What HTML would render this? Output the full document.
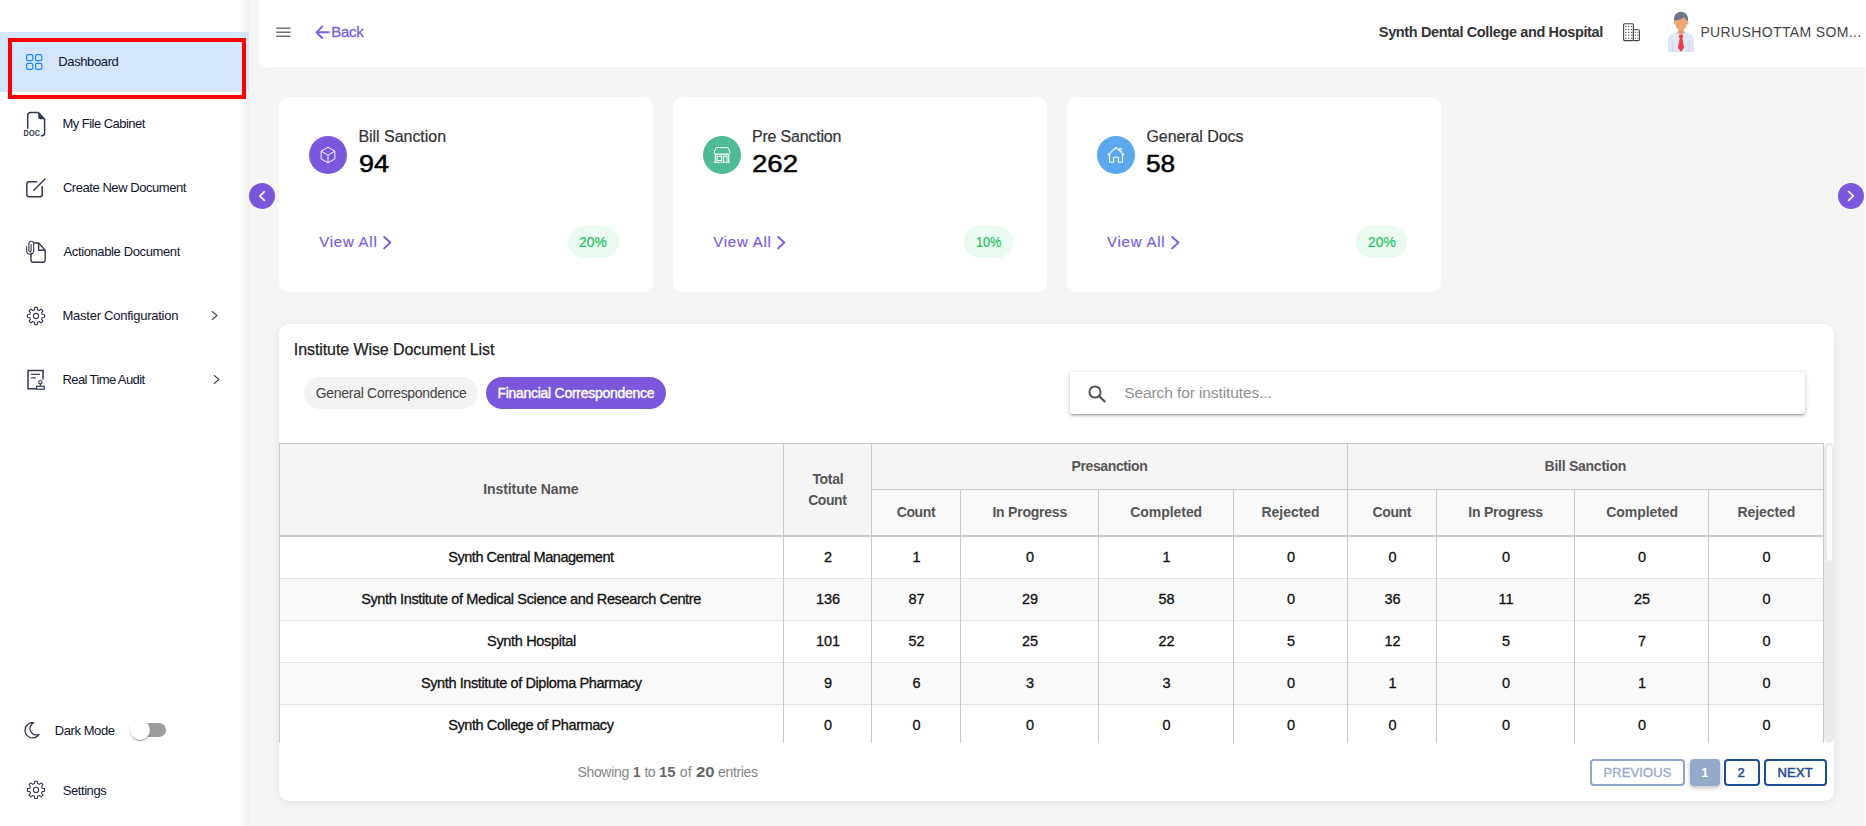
<!DOCTYPE html>
<html><head><meta charset="utf-8"><title>Dashboard</title>
<style>
html,body{margin:0;padding:0}
body{width:1866px;height:826px;overflow:hidden;position:relative;background:#f5f5f5;font-family:"Liberation Sans",sans-serif}
.t{position:absolute;white-space:nowrap;line-height:1}
.abs{position:absolute}
svg{position:absolute;overflow:visible}
.card{position:absolute;background:#fff;border-radius:10px}

</style></head>
<body>
<div class="abs" style="left:0;top:0;width:249px;height:826px;background:linear-gradient(to right,#fff 0,#fff 238px,#f8f8f8 243px,#f0f0f0 248px,#f1f1f1 249px)"></div>
<div class="abs" style="left:0;top:32px;width:249px;height:60px;background:#d3e6fc"></div>
<div class="abs" style="left:8px;top:38px;width:230px;height:53px;border:4px solid #ff0000"></div>
<div class="abs" style="left:259px;top:0;width:1607px;height:67px;background:#fff;border-radius:0 0 0 8px"></div>
<div class="abs" style="left:1864px;top:67px;width:2px;height:759px;background:#f9f9f9"></div>
<div class="card" style="left:279px;top:97px;width:374px;height:195px"></div>
<div class="card" style="left:673px;top:97px;width:374px;height:195px"></div>
<div class="card" style="left:1067px;top:97px;width:374px;height:195px"></div>
<div class="card" style="left:279px;top:324px;width:1555px;height:477px;box-shadow:0 2px 10px rgba(0,0,0,0.08)"></div>
<span class="t" style="left:58.30px;top:55px;font-size:13px;letter-spacing:-0.381px;color:#11142d;">Dashboard</span>
<span class="t" style="left:62.50px;top:117px;font-size:13px;letter-spacing:-0.532px;color:#11142d;">My File Cabinet</span>
<span class="t" style="left:62.88px;top:181px;font-size:13px;letter-spacing:-0.442px;color:#11142d;">Create New Document</span>
<span class="t" style="left:63.50px;top:245px;font-size:13px;letter-spacing:-0.378px;color:#11142d;">Actionable Document</span>
<span class="t" style="left:62.50px;top:309px;font-size:13px;letter-spacing:-0.251px;color:#11142d;">Master Configuration</span>
<span class="t" style="left:62.50px;top:373px;font-size:13px;letter-spacing:-0.607px;color:#11142d;">Real Time Audit</span>
<span class="t" style="left:54.70px;top:724px;font-size:13px;letter-spacing:-0.412px;color:#11142d;">Dark Mode</span>
<span class="t" style="left:62.67px;top:784px;font-size:13px;letter-spacing:-0.411px;color:#11142d;">Settings</span>
<span class="t" style="left:331.25px;top:24px;font-size:15px;letter-spacing:-0.308px;color:#7b5ce0;-webkit-text-stroke:0.3px #7b5ce0;">Back</span>
<span class="t" style="left:1378.83px;top:25px;font-size:14.5px;letter-spacing:-0.363px;color:#333;font-weight:700;">Synth Dental College and Hospital</span>
<span class="t" style="left:1700.38px;top:25px;font-size:14px;letter-spacing:0.375px;color:#444;">PURUSHOTTAM SOM...</span>
<div class="abs" style="left:309px;top:136px;width:38px;height:38px;border-radius:50%;background:#7a57dd"></div>
<span class="t" style="left:358.45px;top:129px;font-size:16px;letter-spacing:-0.037px;color:#333;-webkit-text-stroke:0.2px #333;">Bill Sanction</span>
<span class="t" style="left:358.71px;top:153px;font-size:23.5px;letter-spacing:0.000px;color:#000;-webkit-text-stroke:0.5px #000;transform:scaleX(1.1487);transform-origin:0 0;">94</span>
<span class="t" style="left:319.20px;top:234px;font-size:15px;letter-spacing:0.764px;color:#7b5ce0;-webkit-text-stroke:0.2px #7b5ce0;">View All</span>
<svg style="left:382.8px;top:236px" width="9" height="14" viewBox="0 0 9 14"><path d="M1.2 1 L7.3 6.6 L1.2 12.4" fill="none" stroke="#7b5ce0" stroke-width="2" stroke-linecap="round" stroke-linejoin="round"/></svg>
<div class="abs" style="left:568px;top:226px;width:51px;height:32px;border-radius:16px;background:#ebfaf1"></div>
<span class="t" style="left:579.38px;top:235px;font-size:14px;letter-spacing:0.000px;color:#22c05c;-webkit-text-stroke:0.2px #22c05c;transform:scaleX(0.9889);transform-origin:0 0;">20%</span>
<div class="abs" style="left:703px;top:136px;width:38px;height:38px;border-radius:50%;background:#4fba97"></div>
<span class="t" style="left:751.95px;top:129px;font-size:16px;letter-spacing:-0.198px;color:#333;-webkit-text-stroke:0.2px #333;">Pre Sanction</span>
<span class="t" style="left:751.88px;top:153px;font-size:23.5px;letter-spacing:0.000px;color:#000;-webkit-text-stroke:0.5px #000;transform:scaleX(1.1742);transform-origin:0 0;">262</span>
<span class="t" style="left:713.30px;top:234px;font-size:15px;letter-spacing:0.750px;color:#7b5ce0;-webkit-text-stroke:0.2px #7b5ce0;">View All</span>
<svg style="left:776.8px;top:236px" width="9" height="14" viewBox="0 0 9 14"><path d="M1.2 1 L7.3 6.6 L1.2 12.4" fill="none" stroke="#7b5ce0" stroke-width="2" stroke-linecap="round" stroke-linejoin="round"/></svg>
<div class="abs" style="left:964px;top:226px;width:49px;height:32px;border-radius:16px;background:#ebfaf1"></div>
<span class="t" style="left:975.59px;top:235px;font-size:14px;letter-spacing:0.000px;color:#22c05c;-webkit-text-stroke:0.2px #22c05c;transform:scaleX(0.9052);transform-origin:0 0;">10%</span>
<div class="abs" style="left:1097px;top:136px;width:38px;height:38px;border-radius:50%;background:#5ca8ec"></div>
<span class="t" style="left:1146.45px;top:129px;font-size:16px;letter-spacing:-0.075px;color:#333;-webkit-text-stroke:0.2px #333;">General Docs</span>
<span class="t" style="left:1146.22px;top:153px;font-size:23.5px;letter-spacing:0.000px;color:#000;-webkit-text-stroke:0.5px #000;transform:scaleX(1.1159);transform-origin:0 0;">58</span>
<span class="t" style="left:1107.00px;top:234px;font-size:15px;letter-spacing:0.764px;color:#7b5ce0;-webkit-text-stroke:0.2px #7b5ce0;">View All</span>
<svg style="left:1170.6px;top:236px" width="9" height="14" viewBox="0 0 9 14"><path d="M1.2 1 L7.3 6.6 L1.2 12.4" fill="none" stroke="#7b5ce0" stroke-width="2" stroke-linecap="round" stroke-linejoin="round"/></svg>
<div class="abs" style="left:1356px;top:226px;width:51px;height:32px;border-radius:16px;background:#ebfaf1"></div>
<span class="t" style="left:1367.58px;top:235px;font-size:14px;letter-spacing:0.000px;color:#22c05c;-webkit-text-stroke:0.2px #22c05c;transform:scaleX(0.9889);transform-origin:0 0;">20%</span>
<div class="abs" style="left:249px;top:183px;width:26px;height:26px;border-radius:50%;background:#7a57dd"></div>
<svg style="left:258px;top:190px" width="8" height="12" viewBox="0 0 8 12"><path d="M6.4 1.7 L1.8 6.05 L6.4 10.4" fill="none" stroke="#fff" stroke-width="1.6" stroke-linecap="round" stroke-linejoin="round"/></svg>
<div class="abs" style="left:1838px;top:183px;width:26px;height:26px;border-radius:50%;background:#7a57dd"></div>
<svg style="left:1846.6px;top:190.2px" width="8" height="12" viewBox="0 0 8 12"><path d="M1.6 1.5 L6.3 5.9 L1.6 10.3" fill="none" stroke="#fff" stroke-width="1.6" stroke-linecap="round" stroke-linejoin="round"/></svg>
<span class="t" style="left:293.80px;top:342px;font-size:16px;letter-spacing:-0.082px;color:#222;-webkit-text-stroke:0.25px #222;">Institute Wise Document List</span>
<div class="abs" style="left:304px;top:377px;width:174px;height:32px;border-radius:16px;background:#f3f3f3"></div>
<span class="t" style="left:315.68px;top:386px;font-size:14px;letter-spacing:-0.286px;color:#444;">General Correspondence</span>
<div class="abs" style="left:486px;top:377px;width:180px;height:32px;border-radius:16px;background:#7a57dd"></div>
<span class="t" style="left:497.38px;top:386px;font-size:14px;letter-spacing:-0.272px;color:#fff;-webkit-text-stroke:0.4px #fff;">Financial Correspondence</span>
<div class="abs" style="left:1070px;top:372px;width:735px;height:42px;border-radius:3px;background:#fff;box-shadow:0 2px 2px 0 rgba(0,0,0,.14),0 3px 1px -2px rgba(0,0,0,.12),0 1px 5px 0 rgba(0,0,0,.2)"></div>
<svg style="left:1087px;top:384px" width="20" height="20" viewBox="0 0 20 20"><circle cx="8" cy="8" r="5.6" fill="none" stroke="#555" stroke-width="2"/><path d="M12.2 12.2 L17.6 17.4" stroke="#555" stroke-width="2.2" stroke-linecap="round"/></svg>
<span class="t" style="left:1124.25px;top:385px;font-size:15.5px;letter-spacing:-0.098px;color:#8f8f8f;">Search for institutes...</span>
<div class="abs" style="left:279px;top:443px;width:1546px;height:300px;overflow:hidden">
<div class="abs" style="left:0;top:0;width:1545px;height:93px;background:#f5f5f5"></div>
<div class="abs" style="left:592px;top:46px;width:953px;height:47px;background:#f9f9f9"></div>
<div class="abs" style="left:0;top:135px;width:1545px;height:42px;background:#f9f9f9"></div>
<div class="abs" style="left:0;top:219px;width:1545px;height:42px;background:#f9f9f9"></div>
<div class="abs" style="left:0;top:0;width:1545px;height:1px;background:#c9c9c9"></div>
<div class="abs" style="left:592px;top:46px;width:953px;height:1px;background:#c9c9c9"></div>
<div class="abs" style="left:0;top:92px;width:1545px;height:2px;background:#c9c9c9"></div>
<div class="abs" style="left:0;top:135px;width:1545px;height:1px;background:#e3e3e3"></div>
<div class="abs" style="left:0;top:177px;width:1545px;height:1px;background:#e3e3e3"></div>
<div class="abs" style="left:0;top:219px;width:1545px;height:1px;background:#e3e3e3"></div>
<div class="abs" style="left:0;top:261px;width:1545px;height:1px;background:#e3e3e3"></div>
<div class="abs" style="left:0px;top:0px;width:1px;height:300px;background:#c9c9c9"></div>
<div class="abs" style="left:504px;top:0px;width:1px;height:300px;background:#c9c9c9"></div>
<div class="abs" style="left:592px;top:0px;width:1px;height:300px;background:#c9c9c9"></div>
<div class="abs" style="left:681px;top:46px;width:1px;height:254px;background:#c9c9c9"></div>
<div class="abs" style="left:819px;top:46px;width:1px;height:254px;background:#c9c9c9"></div>
<div class="abs" style="left:954px;top:46px;width:1px;height:254px;background:#c9c9c9"></div>
<div class="abs" style="left:1068px;top:0px;width:1px;height:300px;background:#c9c9c9"></div>
<div class="abs" style="left:1157px;top:46px;width:1px;height:254px;background:#c9c9c9"></div>
<div class="abs" style="left:1295px;top:46px;width:1px;height:254px;background:#c9c9c9"></div>
<div class="abs" style="left:1429px;top:46px;width:1px;height:254px;background:#c9c9c9"></div>
<div class="abs" style="left:1544px;top:0px;width:1px;height:300px;background:#c9c9c9"></div>
</div>
<span class="t" style="left:483.32px;top:482px;font-size:14px;letter-spacing:-0.094px;color:#555;font-weight:700;">Institute Name</span>
<span class="t" style="left:812.38px;top:472px;font-size:14px;letter-spacing:-0.312px;color:#555;font-weight:700;">Total</span>
<span class="t" style="left:808.20px;top:493px;font-size:14px;letter-spacing:-0.438px;color:#555;font-weight:700;">Count</span>
<span class="t" style="left:1071.62px;top:459px;font-size:14px;letter-spacing:-0.400px;color:#555;font-weight:700;">Presanction</span>
<span class="t" style="left:1544.62px;top:459px;font-size:14px;letter-spacing:-0.260px;color:#555;font-weight:700;">Bill Sanction</span>
<span class="t" style="left:896.70px;top:505px;font-size:14px;letter-spacing:-0.388px;color:#555;font-weight:700;">Count</span>
<span class="t" style="left:992.42px;top:505px;font-size:14px;letter-spacing:-0.222px;color:#555;font-weight:700;">In Progress</span>
<span class="t" style="left:1130.30px;top:505px;font-size:14px;letter-spacing:-0.059px;color:#555;font-weight:700;">Completed</span>
<span class="t" style="left:1261.53px;top:505px;font-size:14px;letter-spacing:-0.046px;color:#555;font-weight:700;">Rejected</span>
<span class="t" style="left:1372.50px;top:505px;font-size:14px;letter-spacing:-0.387px;color:#555;font-weight:700;">Count</span>
<span class="t" style="left:1468.33px;top:505px;font-size:14px;letter-spacing:-0.223px;color:#555;font-weight:700;">In Progress</span>
<span class="t" style="left:1606.20px;top:505px;font-size:14px;letter-spacing:-0.047px;color:#555;font-weight:700;">Completed</span>
<span class="t" style="left:1737.42px;top:505px;font-size:14px;letter-spacing:-0.061px;color:#555;font-weight:700;">Rejected</span>
<span class="t" style="left:448.27px;top:550px;font-size:14.5px;letter-spacing:-0.468px;color:#111;-webkit-text-stroke:0.3px #111;">Synth Central Management</span>
<span class="t" style="left:798.0px;width:60px;text-align:center;top:550px;font-size:14.5px;color:#111;-webkit-text-stroke:0.3px #111;letter-spacing:-0.1px">2</span>
<span class="t" style="left:886.5px;width:60px;text-align:center;top:550px;font-size:14.5px;color:#111;-webkit-text-stroke:0.3px #111;letter-spacing:-0.1px">1</span>
<span class="t" style="left:1000.0px;width:60px;text-align:center;top:550px;font-size:14.5px;color:#111;-webkit-text-stroke:0.3px #111;letter-spacing:-0.1px">0</span>
<span class="t" style="left:1136.5px;width:60px;text-align:center;top:550px;font-size:14.5px;color:#111;-webkit-text-stroke:0.3px #111;letter-spacing:-0.1px">1</span>
<span class="t" style="left:1261.0px;width:60px;text-align:center;top:550px;font-size:14.5px;color:#111;-webkit-text-stroke:0.3px #111;letter-spacing:-0.1px">0</span>
<span class="t" style="left:1362.5px;width:60px;text-align:center;top:550px;font-size:14.5px;color:#111;-webkit-text-stroke:0.3px #111;letter-spacing:-0.1px">0</span>
<span class="t" style="left:1476.0px;width:60px;text-align:center;top:550px;font-size:14.5px;color:#111;-webkit-text-stroke:0.3px #111;letter-spacing:-0.1px">0</span>
<span class="t" style="left:1612.0px;width:60px;text-align:center;top:550px;font-size:14.5px;color:#111;-webkit-text-stroke:0.3px #111;letter-spacing:-0.1px">0</span>
<span class="t" style="left:1736.5px;width:60px;text-align:center;top:550px;font-size:14.5px;color:#111;-webkit-text-stroke:0.3px #111;letter-spacing:-0.1px">0</span>
<span class="t" style="left:361.18px;top:592px;font-size:14.5px;letter-spacing:-0.365px;color:#111;-webkit-text-stroke:0.3px #111;">Synth Institute of Medical Science and Research Centre</span>
<span class="t" style="left:798.0px;width:60px;text-align:center;top:592px;font-size:14.5px;color:#111;-webkit-text-stroke:0.3px #111;letter-spacing:-0.1px">136</span>
<span class="t" style="left:886.5px;width:60px;text-align:center;top:592px;font-size:14.5px;color:#111;-webkit-text-stroke:0.3px #111;letter-spacing:-0.1px">87</span>
<span class="t" style="left:1000.0px;width:60px;text-align:center;top:592px;font-size:14.5px;color:#111;-webkit-text-stroke:0.3px #111;letter-spacing:-0.1px">29</span>
<span class="t" style="left:1136.5px;width:60px;text-align:center;top:592px;font-size:14.5px;color:#111;-webkit-text-stroke:0.3px #111;letter-spacing:-0.1px">58</span>
<span class="t" style="left:1261.0px;width:60px;text-align:center;top:592px;font-size:14.5px;color:#111;-webkit-text-stroke:0.3px #111;letter-spacing:-0.1px">0</span>
<span class="t" style="left:1362.5px;width:60px;text-align:center;top:592px;font-size:14.5px;color:#111;-webkit-text-stroke:0.3px #111;letter-spacing:-0.1px">36</span>
<span class="t" style="left:1476.0px;width:60px;text-align:center;top:592px;font-size:14.5px;color:#111;-webkit-text-stroke:0.3px #111;letter-spacing:-0.1px">11</span>
<span class="t" style="left:1612.0px;width:60px;text-align:center;top:592px;font-size:14.5px;color:#111;-webkit-text-stroke:0.3px #111;letter-spacing:-0.1px">25</span>
<span class="t" style="left:1736.5px;width:60px;text-align:center;top:592px;font-size:14.5px;color:#111;-webkit-text-stroke:0.3px #111;letter-spacing:-0.1px">0</span>
<span class="t" style="left:487.07px;top:634px;font-size:14.5px;letter-spacing:-0.329px;color:#111;-webkit-text-stroke:0.3px #111;">Synth Hospital</span>
<span class="t" style="left:798.0px;width:60px;text-align:center;top:634px;font-size:14.5px;color:#111;-webkit-text-stroke:0.3px #111;letter-spacing:-0.1px">101</span>
<span class="t" style="left:886.5px;width:60px;text-align:center;top:634px;font-size:14.5px;color:#111;-webkit-text-stroke:0.3px #111;letter-spacing:-0.1px">52</span>
<span class="t" style="left:1000.0px;width:60px;text-align:center;top:634px;font-size:14.5px;color:#111;-webkit-text-stroke:0.3px #111;letter-spacing:-0.1px">25</span>
<span class="t" style="left:1136.5px;width:60px;text-align:center;top:634px;font-size:14.5px;color:#111;-webkit-text-stroke:0.3px #111;letter-spacing:-0.1px">22</span>
<span class="t" style="left:1261.0px;width:60px;text-align:center;top:634px;font-size:14.5px;color:#111;-webkit-text-stroke:0.3px #111;letter-spacing:-0.1px">5</span>
<span class="t" style="left:1362.5px;width:60px;text-align:center;top:634px;font-size:14.5px;color:#111;-webkit-text-stroke:0.3px #111;letter-spacing:-0.1px">12</span>
<span class="t" style="left:1476.0px;width:60px;text-align:center;top:634px;font-size:14.5px;color:#111;-webkit-text-stroke:0.3px #111;letter-spacing:-0.1px">5</span>
<span class="t" style="left:1612.0px;width:60px;text-align:center;top:634px;font-size:14.5px;color:#111;-webkit-text-stroke:0.3px #111;letter-spacing:-0.1px">7</span>
<span class="t" style="left:1736.5px;width:60px;text-align:center;top:634px;font-size:14.5px;color:#111;-webkit-text-stroke:0.3px #111;letter-spacing:-0.1px">0</span>
<span class="t" style="left:420.98px;top:676px;font-size:14.5px;letter-spacing:-0.399px;color:#111;-webkit-text-stroke:0.3px #111;">Synth Institute of Diploma Pharmacy</span>
<span class="t" style="left:798.0px;width:60px;text-align:center;top:676px;font-size:14.5px;color:#111;-webkit-text-stroke:0.3px #111;letter-spacing:-0.1px">9</span>
<span class="t" style="left:886.5px;width:60px;text-align:center;top:676px;font-size:14.5px;color:#111;-webkit-text-stroke:0.3px #111;letter-spacing:-0.1px">6</span>
<span class="t" style="left:1000.0px;width:60px;text-align:center;top:676px;font-size:14.5px;color:#111;-webkit-text-stroke:0.3px #111;letter-spacing:-0.1px">3</span>
<span class="t" style="left:1136.5px;width:60px;text-align:center;top:676px;font-size:14.5px;color:#111;-webkit-text-stroke:0.3px #111;letter-spacing:-0.1px">3</span>
<span class="t" style="left:1261.0px;width:60px;text-align:center;top:676px;font-size:14.5px;color:#111;-webkit-text-stroke:0.3px #111;letter-spacing:-0.1px">0</span>
<span class="t" style="left:1362.5px;width:60px;text-align:center;top:676px;font-size:14.5px;color:#111;-webkit-text-stroke:0.3px #111;letter-spacing:-0.1px">1</span>
<span class="t" style="left:1476.0px;width:60px;text-align:center;top:676px;font-size:14.5px;color:#111;-webkit-text-stroke:0.3px #111;letter-spacing:-0.1px">0</span>
<span class="t" style="left:1612.0px;width:60px;text-align:center;top:676px;font-size:14.5px;color:#111;-webkit-text-stroke:0.3px #111;letter-spacing:-0.1px">1</span>
<span class="t" style="left:1736.5px;width:60px;text-align:center;top:676px;font-size:14.5px;color:#111;-webkit-text-stroke:0.3px #111;letter-spacing:-0.1px">0</span>
<span class="t" style="left:448.27px;top:718px;font-size:14.5px;letter-spacing:-0.418px;color:#111;-webkit-text-stroke:0.3px #111;">Synth College of Pharmacy</span>
<span class="t" style="left:798.0px;width:60px;text-align:center;top:718px;font-size:14.5px;color:#111;-webkit-text-stroke:0.3px #111;letter-spacing:-0.1px">0</span>
<span class="t" style="left:886.5px;width:60px;text-align:center;top:718px;font-size:14.5px;color:#111;-webkit-text-stroke:0.3px #111;letter-spacing:-0.1px">0</span>
<span class="t" style="left:1000.0px;width:60px;text-align:center;top:718px;font-size:14.5px;color:#111;-webkit-text-stroke:0.3px #111;letter-spacing:-0.1px">0</span>
<span class="t" style="left:1136.5px;width:60px;text-align:center;top:718px;font-size:14.5px;color:#111;-webkit-text-stroke:0.3px #111;letter-spacing:-0.1px">0</span>
<span class="t" style="left:1261.0px;width:60px;text-align:center;top:718px;font-size:14.5px;color:#111;-webkit-text-stroke:0.3px #111;letter-spacing:-0.1px">0</span>
<span class="t" style="left:1362.5px;width:60px;text-align:center;top:718px;font-size:14.5px;color:#111;-webkit-text-stroke:0.3px #111;letter-spacing:-0.1px">0</span>
<span class="t" style="left:1476.0px;width:60px;text-align:center;top:718px;font-size:14.5px;color:#111;-webkit-text-stroke:0.3px #111;letter-spacing:-0.1px">0</span>
<span class="t" style="left:1612.0px;width:60px;text-align:center;top:718px;font-size:14.5px;color:#111;-webkit-text-stroke:0.3px #111;letter-spacing:-0.1px">0</span>
<span class="t" style="left:1736.5px;width:60px;text-align:center;top:718px;font-size:14.5px;color:#111;-webkit-text-stroke:0.3px #111;letter-spacing:-0.1px">0</span>
<div class="abs" style="left:1824px;top:443px;width:10px;height:300px;background:#ebebeb;border-radius:5px"></div>
<div class="abs" style="left:1827px;top:445px;width:4.5px;height:116px;background:#fcfcfc;border-radius:3px"></div>
<span class="t" style="left:577.38px;top:765px;font-size:14px;letter-spacing:-0.304px;color:#858585;">Showing</span>
<span class="t" style="left:632.51px;top:764px;font-size:15px;letter-spacing:0.000px;color:#666;font-weight:700;transform:scaleX(0.8982);transform-origin:0 0;">1</span>
<span class="t" style="left:644.38px;top:765px;font-size:14px;letter-spacing:-0.500px;color:#858585;">to</span>
<span class="t" style="left:659.14px;top:764px;font-size:15px;letter-spacing:0.000px;color:#666;font-weight:700;transform:scaleX(0.9871);transform-origin:0 0;">15</span>
<span class="t" style="left:679.80px;top:765px;font-size:14px;letter-spacing:0.150px;color:#858585;">of</span>
<span class="t" style="left:695.74px;top:764px;font-size:15px;letter-spacing:0.000px;color:#666;font-weight:700;transform:scaleX(1.1136);transform-origin:0 0;">20</span>
<span class="t" style="left:718.08px;top:765px;font-size:14px;letter-spacing:-0.346px;color:#858585;">entries</span>
<div class="abs" style="left:1590px;top:759px;width:91px;height:23px;border:2px solid #8fa5ca;border-radius:4px"></div>
<span class="t" style="left:1603.40px;top:766px;font-size:13px;letter-spacing:0.111px;color:#94a9cd;-webkit-text-stroke:0.3px #94a9cd;">PREVIOUS</span>
<div class="abs" style="left:1690px;top:759px;width:30px;height:27px;background:#95a9cb;border-radius:4px;box-shadow:0 2px 4px rgba(0,0,0,.25)"></div>
<span class="t" style="left:1701.25px;top:766px;font-size:13px;letter-spacing:0.000px;color:#fff;font-weight:700;">1</span>
<div class="abs" style="left:1724px;top:759px;width:32px;height:23px;border:2px solid #1f4c96;border-radius:4px"></div>
<span class="t" style="left:1737.47px;top:766px;font-size:13px;letter-spacing:0.000px;color:#1f4c96;-webkit-text-stroke:0.5px #1f4c96;">2</span>
<div class="abs" style="left:1764px;top:759px;width:59px;height:23px;border:2px solid #1f4c96;border-radius:4px"></div>
<span class="t" style="left:1777.50px;top:766px;font-size:13px;letter-spacing:0.175px;color:#1f4c96;-webkit-text-stroke:0.5px #1f4c96;">NEXT</span>
<svg style="left:25.7px;top:54px" width="17" height="16" viewBox="0 0 17 16"><rect x="0.6" y="0.6" width="6.2" height="6.0" rx="1.4" fill="none" stroke="#1a85ff" stroke-width="1.2"/><rect x="9.6" y="0.6" width="6.2" height="6.0" rx="1.4" fill="none" stroke="#1a85ff" stroke-width="1.2"/><rect x="0.6" y="9.4" width="6.2" height="6.0" rx="1.4" fill="none" stroke="#1a85ff" stroke-width="1.2"/><rect x="9.6" y="9.4" width="6.2" height="6.0" rx="1.4" fill="none" stroke="#1a85ff" stroke-width="1.2"/></svg>
<svg style="left:20px;top:108px" width="30" height="32" viewBox="20 108 30 32"><path d="M27.7 128.2 V115.6 a3 3 0 0 1 3 -3 H38.4 L44.6 119.2 V133 a2.8 2.8 0 0 1 -2.8 2.8 H41.4" fill="none" stroke="#343852" stroke-width="1.5" stroke-linecap="round" stroke-linejoin="round"/><path d="M38.2 112.6 V117.2 a2 2 0 0 0 2 2 H44.6 Z" fill="#343852"/><text x="23.6" y="135.7" font-family="Liberation Sans, sans-serif" font-weight="700" font-size="8.3" fill="#343852" textLength="16.4" lengthAdjust="spacingAndGlyphs">DOC</text></svg>
<svg style="left:20px;top:172px" width="30" height="30" viewBox="20 172 30 30"><path d="M36.6 181.7 H29 a2.2 2.2 0 0 0 -2.2 2.2 V194.6 a2.2 2.2 0 0 0 2.2 2.2 H40 a2.2 2.2 0 0 0 2.2 -2.2 V186.4" fill="none" stroke="#343852" stroke-width="1.5" stroke-linecap="round"/><path d="M33.8 190.2 L45 178.9" stroke="#343852" stroke-width="1.4" stroke-linecap="round"/></svg>
<svg style="left:20px;top:236px" width="30" height="30" viewBox="20 236 30 30"><path d="M31 253 V260 a2.2 2.2 0 0 0 2.2 2.2 H43 a2.2 2.2 0 0 0 2.2 -2.2 V250.2 L38.6 243 H34.6" fill="none" stroke="#343852" stroke-width="1.4" stroke-linecap="round" stroke-linejoin="round"/><path d="M38.6 243 V250.2 H45.2" fill="none" stroke="#343852" stroke-width="1.4" stroke-linejoin="round"/><path d="M26.7 246.5 V250.8 a3.5 3.5 0 0 0 7 0 V243.6 a2.4 2.4 0 0 0 -4.8 0 V250.6 a1.1 1.1 0 0 0 2.2 0 V244.6" fill="none" stroke="#343852" stroke-width="1.1" stroke-linecap="round"/></svg>
<svg style="left:20px;top:300px" width="32" height="32" viewBox="20 300 32 32"><path d="M34.48 309.68 L34.71 307.40 L37.29 307.40 L37.52 309.68 L39.40 310.46 L41.17 309.00 L43.00 310.83 L41.54 312.60 L42.32 314.48 L44.60 314.71 L44.60 317.29 L42.32 317.52 L41.54 319.40 L43.00 321.17 L41.17 323.00 L39.40 321.54 L37.52 322.32 L37.29 324.60 L34.71 324.60 L34.48 322.32 L32.60 321.54 L30.83 323.00 L29.00 321.17 L30.46 319.40 L29.68 317.52 L27.40 317.29 L27.40 314.71 L29.68 314.48 L30.46 312.60 L29.00 310.83 L30.83 309.00 L32.60 310.46 Z" fill="none" stroke="#343852" stroke-width="1.1" stroke-linejoin="round"/><circle cx="36" cy="316" r="2.6" fill="none" stroke="#343852" stroke-width="1.1"/></svg>
<svg style="left:20px;top:774px" width="32" height="32" viewBox="20 774 32 32"><path d="M34.48 783.58 L34.71 781.30 L37.29 781.30 L37.52 783.58 L39.40 784.36 L41.17 782.90 L43.00 784.73 L41.54 786.50 L42.32 788.38 L44.60 788.61 L44.60 791.19 L42.32 791.42 L41.54 793.30 L43.00 795.07 L41.17 796.90 L39.40 795.44 L37.52 796.22 L37.29 798.50 L34.71 798.50 L34.48 796.22 L32.60 795.44 L30.83 796.90 L29.00 795.07 L30.46 793.30 L29.68 791.42 L27.40 791.19 L27.40 788.61 L29.68 788.38 L30.46 786.50 L29.00 784.73 L30.83 782.90 L32.60 784.36 Z" fill="none" stroke="#343852" stroke-width="1.1" stroke-linejoin="round"/><circle cx="36" cy="789.9" r="2.6" fill="none" stroke="#343852" stroke-width="1.1"/></svg>
<svg style="left:20px;top:364px" width="30" height="30" viewBox="20 364 30 30"><path d="M36.4 388.7 H28 V370.5 H43 V379.4" fill="none" stroke="#343852" stroke-width="1.5" stroke-linejoin="miter"/><path d="M31 374.3 H40" stroke="#343852" stroke-width="1.2"/><path d="M31 377.9 H35.8" stroke="#343852" stroke-width="1.2"/><circle cx="40.4" cy="382.2" r="1.7" fill="none" stroke="#343852" stroke-width="1.1"/><path d="M40.4 383.9 V386" stroke="#343852" stroke-width="1.1"/><rect x="36.6" y="386.3" width="7.7" height="2.9" fill="none" stroke="#343852" stroke-width="1.2"/></svg>
<svg style="left:205px;top:305px" width="20" height="20" viewBox="205 305 20 20"><path d="M212.2 311.5 L217 315.5 L212.2 319.5" fill="none" stroke="#444" stroke-width="1.05" stroke-linecap="round" stroke-linejoin="round"/></svg>
<svg style="left:205px;top:369px" width="20" height="20" viewBox="205 369 20 20"><path d="M214.2 375.5 L219 379.5 L214.2 383.5" fill="none" stroke="#444" stroke-width="1.05" stroke-linecap="round" stroke-linejoin="round"/></svg>
<svg style="left:20px;top:716px" width="24" height="28" viewBox="20 716 24 28"><path d="M33.66 722.8 A7.6 7.6 0 1 0 39.04 734.3 A6.3 6.3 0 0 1 33.66 722.8 Z" fill="none" stroke="#343852" stroke-width="1.3" stroke-linejoin="round"/></svg>
<div class="abs" style="left:132px;top:723px;width:34px;height:14px;border-radius:7px;background:#9e9e9e"></div>
<div class="abs" style="left:129.6px;top:720px;width:20px;height:20px;border-radius:50%;background:#fff;box-shadow:0 2px 1px -1px rgba(0,0,0,.2),0 1px 1px 0 rgba(0,0,0,.14),0 1px 3px 0 rgba(0,0,0,.12)"></div>
<svg style="left:270px;top:22px" width="28" height="20" viewBox="270 22 28 20"><path d="M276.3 28.3 H290.5 M276.3 32.3 H290.5 M276.3 36.3 H290.5" stroke="#727272" stroke-width="1.5"/></svg>
<svg style="left:310px;top:22px" width="24" height="20" viewBox="310 22 24 20"><path d="M316.6 32.3 H328.8 M322.2 26.6 L316.5 32.3 L322.2 38" fill="none" stroke="#7b5ce0" stroke-width="1.9" stroke-linecap="round" stroke-linejoin="round"/></svg>
<svg style="left:1618px;top:18px" width="28" height="28" viewBox="1618 18 28 28"><rect x="1623.6" y="23.8" width="9.8" height="16.8" rx="1" fill="#fff" stroke="#444" stroke-width="1.1"/><rect x="1633.4" y="29.8" width="6" height="10.8" rx="1" fill="#fff" stroke="#444" stroke-width="1.1"/><rect x="1625.3" y="26.0" width="1.1" height="1.1" fill="#333"/><rect x="1628.2" y="26.0" width="1.1" height="1.1" fill="#333"/><rect x="1631.1" y="26.0" width="1.1" height="1.1" fill="#333"/><rect x="1625.3" y="28.9" width="1.1" height="1.1" fill="#333"/><rect x="1628.2" y="28.9" width="1.1" height="1.1" fill="#333"/><rect x="1631.1" y="28.9" width="1.1" height="1.1" fill="#333"/><rect x="1625.3" y="31.8" width="1.1" height="1.1" fill="#333"/><rect x="1628.2" y="31.8" width="1.1" height="1.1" fill="#333"/><rect x="1631.1" y="31.8" width="1.1" height="1.1" fill="#333"/><rect x="1625.3" y="34.7" width="1.1" height="1.1" fill="#333"/><rect x="1628.2" y="34.7" width="1.1" height="1.1" fill="#333"/><rect x="1631.1" y="34.7" width="1.1" height="1.1" fill="#333"/><rect x="1625.3" y="37.6" width="1.1" height="1.1" fill="#333"/><rect x="1628.2" y="37.6" width="1.1" height="1.1" fill="#333"/><rect x="1631.1" y="37.6" width="1.1" height="1.1" fill="#333"/><rect x="1634.8" y="31.8" width="1" height="1" fill="#333"/><rect x="1637.4" y="31.8" width="1" height="1" fill="#333"/><rect x="1634.8" y="34.7" width="1" height="1" fill="#333"/><rect x="1637.4" y="34.7" width="1" height="1" fill="#333"/><rect x="1634.8" y="37.6" width="1" height="1" fill="#333"/><rect x="1637.4" y="37.6" width="1" height="1" fill="#333"/></svg>
<svg style="left:1660px;top:8px" width="40" height="48" viewBox="1660 8 40 48"><path d="M1668 52 V40 Q1668 34.5 1674 33 L1678.2 31.6 H1683.8 L1688 33 Q1694 34.5 1694 40 V52 Z" fill="#dfe6f6"/><path d="M1672.3 40 V52 M1689.4 40 V52" stroke="#ccd5ea" stroke-width="0.9"/><path d="M1676.3 32.3 L1681 36.2 L1685.7 32.3 L1684 31 H1678 Z" fill="#d2d9e8"/><rect x="1678.2" y="27" width="5.6" height="6.5" fill="#ec9c6b"/><path d="M1678.2 33 L1681 35.8 L1683.8 33 Z" fill="#ec9c6b"/><ellipse cx="1674.8" cy="22.8" rx="1.3" ry="1.8" fill="#f0a574"/><ellipse cx="1687.2" cy="22.8" rx="1.3" ry="1.8" fill="#f0a574"/><path d="M1675.4 18 H1686.6 V23.5 Q1686.6 30 1681 30 Q1675.4 30 1675.4 23.5 Z" fill="#f0a574"/><path d="M1674 21 V18.8 A7 7 0 0 1 1688 18.8 V21 L1686.6 20.8 Q1686 18.4 1684 17.6 Q1680 20 1675.4 20.6 Z" fill="#6b7591"/><path d="M1679.4 35 H1682.6 L1683.3 36.6 L1682.3 38.2 L1684 48 L1681 51.8 L1678 48 L1679.7 38.2 L1678.7 36.6 Z" fill="#ee3b44"/></svg>
<svg style="left:309px;top:136px" width="38" height="38" viewBox="309 136 38 38"><path d="M328 147.2 L334.9 151.2 V158.8 L328 162.8 L321.1 158.8 V151.2 Z M321.1 151.2 L328 155.1 L334.9 151.2 M328 155.1 V162.8" fill="none" stroke="#fff" stroke-width="1" stroke-linejoin="round" opacity="0.95"/></svg>
<svg style="left:703px;top:136px" width="38" height="38" viewBox="703 136 38 38"><path d="M716.3 147.6 H727.7 Q729.2 149.5 729.8 152.6 Q729.8 154 728.5 154 H715.5 Q714.2 154 714.2 152.6 Q714.8 149.5 716.3 147.6 Z" fill="none" stroke="#fff" stroke-width="1"/><path d="M715.3 154 V162.2 M728.7 154 V162.2 M713.7 162.3 H730.3" stroke="#fff" stroke-width="1.1"/><path d="M715.3 154.6 H728.7" stroke="#fff" stroke-width="1.4" stroke-dasharray="2.4 1"/><rect x="717" y="156.3" width="4.6" height="4.2" fill="none" stroke="#fff" stroke-width="1"/><path d="M723.6 162 V156.3 H727 V162" fill="none" stroke="#fff" stroke-width="1"/></svg>
<svg style="left:1097px;top:136px" width="38" height="38" viewBox="1097 136 38 38"><path d="M1108 154.9 L1116 147.3 L1124 154.9" fill="none" stroke="#fff" stroke-width="1.1" stroke-linecap="round" stroke-linejoin="round"/><path d="M1109.6 154 V162.3 H1113.6 V157.2 H1118.4 V162.3 H1122.4 V154" fill="none" stroke="#fff" stroke-width="1.1" stroke-linejoin="round"/><path d="M1119.6 150.2 V148.3 H1121.2 V151.8" fill="none" stroke="#fff" stroke-width="0.9"/></svg>
</body></html>
